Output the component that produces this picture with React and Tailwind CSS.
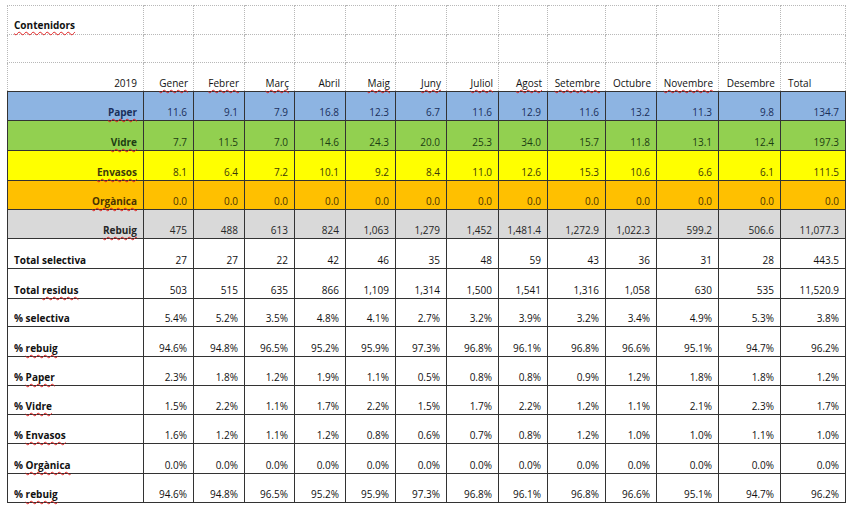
const widths = [
  "w-[136px]", "w-[50px]", "w-[51px]", "w-[50px]", "w-[51px]", "w-[50px]", "w-[51px]",
  "w-[52px]", "w-[49px]", "w-[58px]", "w-[51px]", "w-[62px]", "w-[62px]", "w-[65px]",
];

// words flagged by the spell checker
const Wavy = ({ children }) => (
  <span className="underline decoration-wavy decoration-[#e02020] decoration-1 underline-offset-[2px]">
    {children}
  </span>
);

const months = [
  ["Gener", true], ["Febrer", true], ["Març", true], ["Abril", false], ["Maig", true],
  ["Juny", true], ["Juliol", true], ["Agost", true], ["Setembre", true], ["Octubre", false],
  ["Novembre", true], ["Desembre", false],
];

const colored = [
  { label: "Paper", bg: "bg-[#8db4e2]", text: "text-[#1a2f5a]", h: "h-[29px]",
    values: ["11.6", "9.1", "7.9", "16.8", "12.3", "6.7", "11.6", "12.9", "11.6", "13.2", "11.3", "9.8", "134.7"] },
  { label: "Vidre", bg: "bg-[#92d050]", text: "text-[#1d3d12]", h: "h-[30px]",
    values: ["7.7", "11.5", "7.0", "14.6", "24.3", "20.0", "25.3", "34.0", "15.7", "11.8", "13.1", "12.4", "197.3"] },
  { label: "Envasos", bg: "bg-[#ffff00]", text: "text-[#3d3a0a]", h: "h-[30px]",
    values: ["8.1", "6.4", "7.2", "10.1", "9.2", "8.4", "11.0", "12.6", "15.3", "10.6", "6.6", "6.1", "111.5"] },
  { label: "Orgànica", bg: "bg-[#ffc000]", text: "text-[#4a3300]", h: "h-[29px]",
    values: Array(13).fill("0.0") },
  { label: "Rebuig", bg: "bg-[#d9d9d9]", text: "text-[#262626]", h: "h-[29px]",
    values: ["475", "488", "613", "824", "1,063", "1,279", "1,452", "1,481.4", "1,272.9", "1,022.3", "599.2", "506.6", "11,077.3"] },
];

const plain = [
  { pre: "Total selectiva", word: "", h: "h-[30px]",
    values: ["27", "27", "22", "42", "46", "35", "48", "59", "43", "36", "31", "28", "443.5"] },
  { pre: "Total ", word: "residus", h: "h-[30px]",
    values: ["503", "515", "635", "866", "1,109", "1,314", "1,500", "1,541", "1,316", "1,058", "630", "535", "11,520.9"] },
  { pre: "% selectiva", word: "", h: "h-[28px]",
    values: ["5.4%", "5.2%", "3.5%", "4.8%", "4.1%", "2.7%", "3.2%", "3.9%", "3.2%", "3.4%", "4.9%", "5.3%", "3.8%"] },
  { pre: "% ", word: "rebuig", h: "h-[30px]",
    values: ["94.6%", "94.8%", "96.5%", "95.2%", "95.9%", "97.3%", "96.8%", "96.1%", "96.8%", "96.6%", "95.1%", "94.7%", "96.2%"] },
  { pre: "% ", word: "Paper", h: "h-[29px]",
    values: ["2.3%", "1.8%", "1.2%", "1.9%", "1.1%", "0.5%", "0.8%", "0.8%", "0.9%", "1.2%", "1.8%", "1.8%", "1.2%"] },
  { pre: "% ", word: "Vidre", h: "h-[29px]",
    values: ["1.5%", "2.2%", "1.1%", "1.7%", "2.2%", "1.5%", "1.7%", "2.2%", "1.2%", "1.1%", "2.1%", "2.3%", "1.7%"] },
  { pre: "% ", word: "Envasos", h: "h-[29px]",
    values: ["1.6%", "1.2%", "1.1%", "1.2%", "0.8%", "0.6%", "0.7%", "0.8%", "1.2%", "1.0%", "1.0%", "1.1%", "1.0%"] },
  { pre: "% ", word: "Orgànica", h: "h-[30px]",
    values: Array(13).fill("0.0%") },
  { pre: "% ", word: "rebuig", h: "h-[29px]",
    values: ["94.6%", "94.8%", "96.5%", "95.2%", "95.9%", "97.3%", "96.8%", "96.1%", "96.8%", "96.6%", "95.1%", "94.7%", "96.2%"] },
];

const grid = "border border-dotted border-[#b8b8b8] p-0";
const cell = "border border-solid border-[#333333] align-bottom pb-[2px] px-[6px]";

export default function App() {
  return (
    <div className="w-[850px] h-[510px] bg-white pt-[5px] pl-[7px] overflow-hidden">
      <table
        className="table-fixed border-collapse text-[10px] leading-[12px] text-[#111]"
        style={{ fontFamily: '"Open Sans", "Noto Sans", sans-serif' }}
      >
        <colgroup>
          {widths.map((w, i) => (
            <col key={i} className={w} />
          ))}
        </colgroup>
        <tbody>
          {/* sheet title */}
          <tr className="h-[29px]">
            <td className={`${grid} align-bottom pb-[3px] pl-[6px] font-bold`}>
              <Wavy>Contenidors</Wavy>
            </td>
            {widths.slice(1).map((w, i) => (
              <td key={i} className={grid}></td>
            ))}
          </tr>
          <tr className="h-[28px]">
            {widths.map((w, i) => (
              <td key={i} className={grid}></td>
            ))}
          </tr>

          {/* header row */}
          <tr className="h-[29px]">
            <td className={`${grid} align-bottom text-right pr-[6px] pb-[2px]`}>2019</td>
            {months.map(([m, u]) => (
              <td key={m} className={`${grid} align-bottom text-right pr-[5px] pb-[2px] whitespace-nowrap`}>
                {u ? <Wavy>{m}</Wavy> : m}
              </td>
            ))}
            <td className={`${grid} align-bottom text-left pl-[7px] pb-[2px]`}>Total</td>
          </tr>

          {colored.map((r) => (
            <tr key={r.label} className={`${r.h} ${r.bg} ${r.text}`}>
              <td className={`${cell} text-right font-bold`}>
                <Wavy>{r.label}</Wavy>
              </td>
              {r.values.map((v, i) => (
                <td key={i} className={`${cell} text-right whitespace-nowrap`}>{v}</td>
              ))}
            </tr>
          ))}

          {plain.map((r, k) => (
            <tr key={k} className={r.h}>
              <td className={`${cell} text-left font-bold`}>
                {r.pre}
                {r.word && <Wavy>{r.word}</Wavy>}
              </td>
              {r.values.map((v, i) => (
                <td key={i} className={`${cell} text-right whitespace-nowrap`}>{v}</td>
              ))}
            </tr>
          ))}
        </tbody>
      </table>
    </div>
  );
}
